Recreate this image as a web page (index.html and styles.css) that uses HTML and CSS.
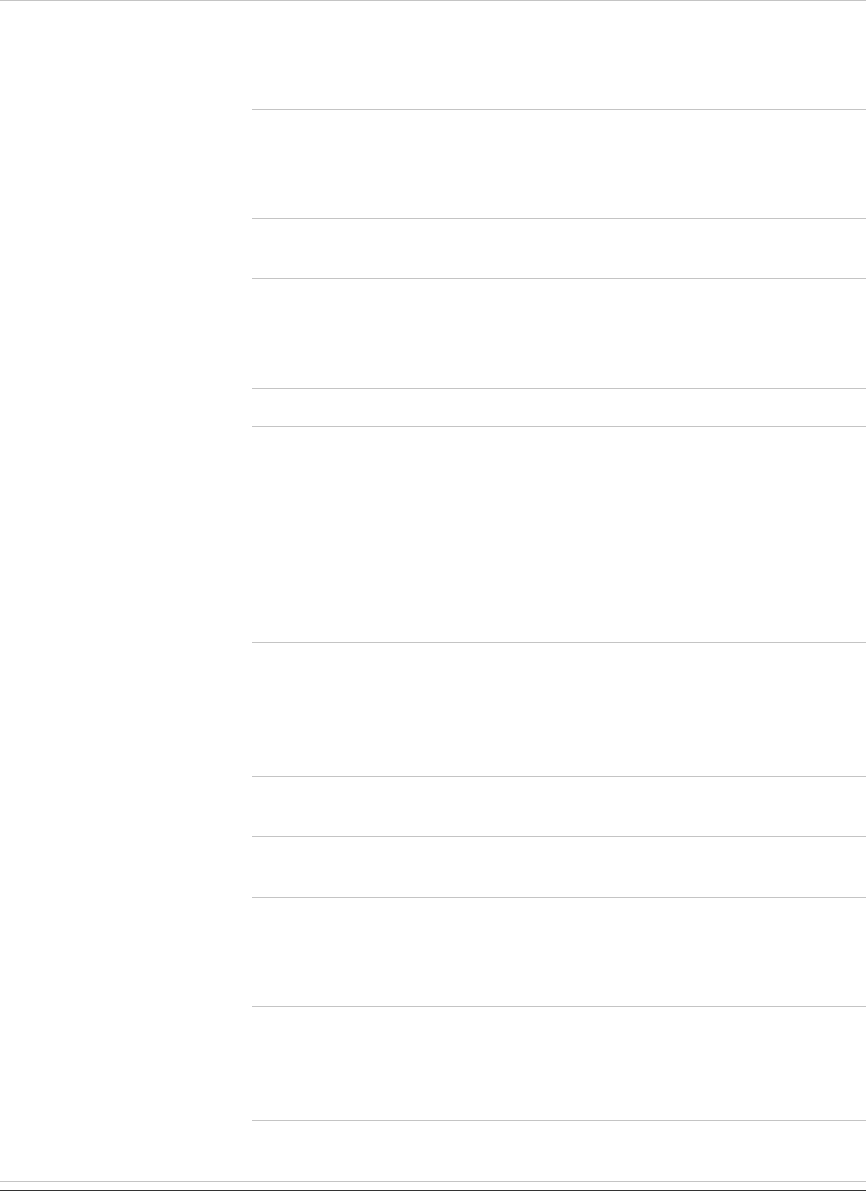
FILE: index.html
```html
<!DOCTYPE html>
<html lang="en">
<head>
<meta charset="utf-8">
<title>Page</title>
<link rel="stylesheet" href="styles.css">
</head>
<body>
<div class="page">
  <div class="layout">
    <aside class="sidebar"></aside>
    <main class="rows">
      <div class="row h109"></div>
      <div class="row h109"></div>
      <div class="row h60"></div>
      <div class="row h110"></div>
      <div class="row h38"></div>
      <div class="row h216"></div>
      <div class="row h134"></div>
      <div class="row h60"></div>
      <div class="row h61"></div>
      <div class="row h109"></div>
      <div class="row h114"></div>
      <div class="row last h60"></div>
    </main>
  </div>
  <footer class="footer"></footer>
</div>
</body>
</html>
```

FILE: styles.css
```css
html, body {
  margin: 0;
  padding: 0;
  background: #ffffff;
  font-family: "Liberation Sans", Arial, sans-serif;
}
.page {
  width: 866px;
  height: 1191px;
  border-top: 1px solid #c4c4c4;
  box-sizing: border-box;
  display: flex;
  flex-direction: column;
}
.layout {
  display: flex;
}
.sidebar {
  width: 252px;
  flex: none;
}
.rows {
  flex: 1;
  display: flex;
  flex-direction: column;
}
.row {
  border-bottom: 1px solid #c4c4c4;
  box-sizing: border-box;
}
.row.last {
  border-bottom: none;
}
.h38 { height: 38px; }
.h60 { height: 60px; }
.h61 { height: 61px; }
.h109 { height: 109px; }
.h110 { height: 110px; }
.h114 { height: 114px; }
.h134 { height: 134px; }
.h216 { height: 216px; }
.footer {
  border-top: 1px solid #c4c4c4;
  border-bottom: 1px solid #333333;
  margin-top: auto;
  height: 11px;
  box-sizing: border-box;
}
```
